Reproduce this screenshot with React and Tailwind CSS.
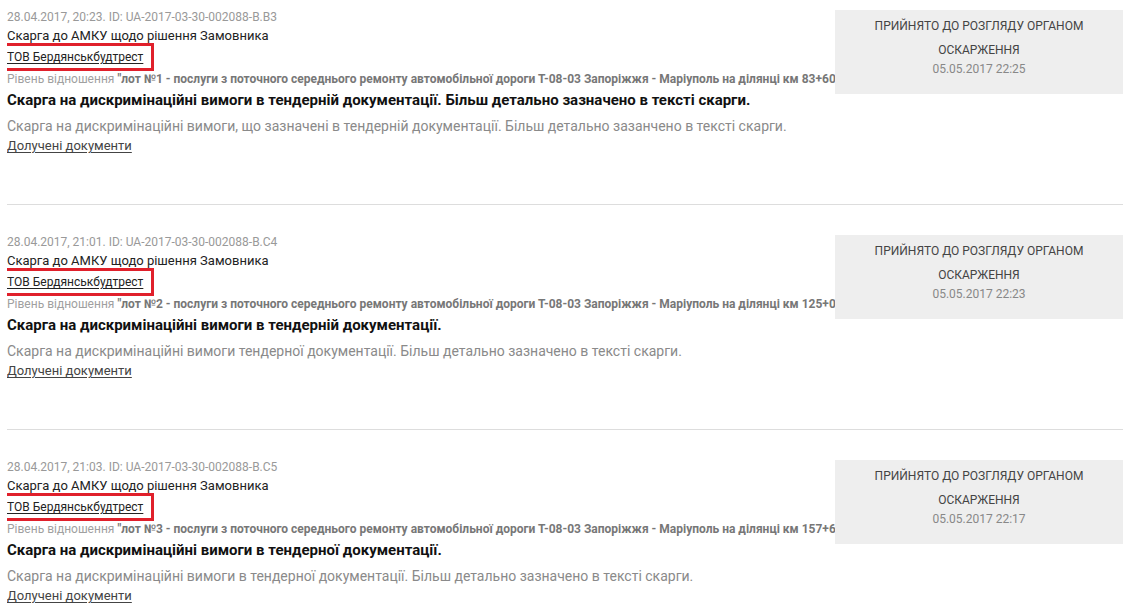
import * as React from "react";

const complaints = [
  {
    meta: "28.04.2017, 20:23. ID: UA-2017-03-30-002088-B.B3",
    lot: "\"лот №1 - послуги з поточного середнього ремонту автомобільної дороги Т-08-03 Запоріжжя - Маріуполь на ділянці км 83+60",
    title: "Скарга на дискримінаційні вимоги в тендерній документації. Більш детально зазначено в тексті скарги.",
    text: "Скарга на дискримінаційні вимоги, що зазначені в тендерній документації. Більш детально зазанчено в тексті скарги.",
    date: "05.05.2017 22:25",
  },
  {
    meta: "28.04.2017, 21:01. ID: UA-2017-03-30-002088-B.C4",
    lot: "\"лот №2 - послуги з поточного середнього ремонту автомобільної дороги Т-08-03 Запоріжжя - Маріуполь на ділянці км 125+0",
    title: "Скарга на дискримінаційні вимоги в тендерній документації.",
    text: "Скарга на дискримінаційні вимоги тендерної документації. Більш детально зазначено в тексті скарги.",
    date: "05.05.2017 22:23",
  },
  {
    meta: "28.04.2017, 21:03. ID: UA-2017-03-30-002088-B.C5",
    lot: "\"лот №3 - послуги з поточного середнього ремонту автомобільної дороги Т-08-03 Запоріжжя - Маріуполь на ділянці км 157+6",
    title: "Скарга на дискримінаційні вимоги в тендерної документації.",
    text: "Скарга на дискримінаційні вимоги в тендерної документації. Більш детально зазначено в тексті скарги.",
    date: "05.05.2017 22:17",
  },
];

function Complaint({ item }) {
  return (
    <div className="flex h-[205px] border-b border-[#dddddd] mb-[20px]">
      <div className="flex-1 min-w-0 overflow-hidden">
        <div className="text-[12px] leading-[20px] mt-[7px] text-[#999999]">{item.meta}</div>
        <div className="text-[13px] leading-[18px] text-[#222222]">
          Скарга до АМКУ щодо рішення Замовника
        </div>
        <div className="mt-[-1px] h-[22px]">
          <span className="inline-block ml-[-3px] pl-[3px] pr-[8px] text-[12px] leading-[22px] text-[#222222] outline-[3px] outline-solid outline-[#e0202b]">
            <span className="underline underline-offset-2">ТОВ Бердянськбудтрест</span>
          </span>
        </div>
        <div className="mt-[4px] text-[12px] leading-[18px] whitespace-nowrap overflow-hidden">
          <span className="text-[#a0a0a0]">Рівень відношення</span>{" "}
          <span className="font-bold text-[#777777]">{item.lot}</span>
        </div>
        <div className="mt-[1px] text-[15px] leading-[22px] font-bold text-[#111111]">{item.title}</div>
        <div className="mt-[5px] text-[14px] leading-[20px] text-[#8a8a8a]">{item.text}</div>
        <div className="text-[13px] leading-[20px] text-[#444444] underline underline-offset-2">
          Долучені документи
        </div>
      </div>
      <div className="w-[288px] shrink-0 self-start mt-[10px] bg-[#eeeeee] pt-[4px] pb-[16px] text-center">
        <div className="text-[12px] leading-[24px] text-[#444444]">
          ПРИЙНЯТО ДО РОЗГЛЯДУ ОРГАНОМ
          <br />
          ОСКАРЖЕННЯ
        </div>
        <div className="mt-[-2px] text-[12px] leading-[18px] text-[#888888]">{item.date}</div>
      </div>
    </div>
  );
}

export default function App() {
  return (
    <div className="w-[1148px] h-[615px] overflow-hidden bg-white px-[7px] font-['Roboto',sans-serif]">
      <div className="w-[1116px]">
        {complaints.map((c, i) => (
          <Complaint key={i} item={c} />
        ))}
      </div>
    </div>
  );
}
